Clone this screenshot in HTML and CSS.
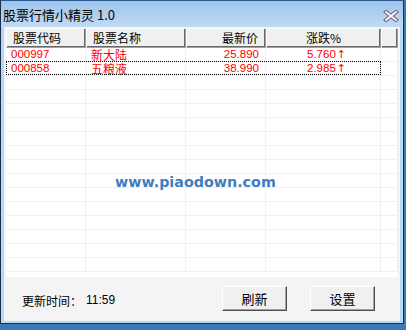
FILE: index.html
```html
<!DOCTYPE html>
<html>
<head>
<meta charset="utf-8">
<link rel="stylesheet" href="styles.css">
</head>
<body>
<div class="window">
  <div class="titlebar">
    <span class="title">股票行情小精灵 1.0</span>
    <svg class="close" width="16" height="12" viewBox="0 0 16 12">
      <path d="M3 2 L13 10 M13 2 L3 10" stroke="#6a5a70" stroke-width="4" stroke-linecap="square"/>
      <path d="M3 2 L13 10 M13 2 L3 10" stroke="#f4f4f6" stroke-width="2" stroke-linecap="square"/>
    </svg>
  </div>
  <div class="client">
    <div class="list">
      <div class="header">
        <div class="hc c1">股票代码</div>
        <div class="hc c2">股票名称</div>
        <div class="hc c3">最新价</div>
        <div class="hc c4">涨跌%</div>
        <div class="hc c5"></div>
      </div>
      <div class="rows">
        <div class="row data">
          <div class="cell c1 num">000997</div>
          <div class="cell c2">新大陆</div>
          <div class="cell c3 num">25.890</div>
          <div class="cell c4 num">5.760<span class="arrow">↑</span></div>
          <div class="cell c5"></div>
        </div>
        <div class="row data focus">
          <div class="cell c1 num">000858</div>
          <div class="cell c2">五粮液</div>
          <div class="cell c3 num">38.990</div>
          <div class="cell c4 num">2.985<span class="arrow">↑</span></div>
          <div class="cell c5"></div>
        </div>
        <div class="row"><div class="cell c1"></div><div class="cell c2"></div><div class="cell c3"></div><div class="cell c4"></div><div class="cell c5"></div></div>
        <div class="row"><div class="cell c1"></div><div class="cell c2"></div><div class="cell c3"></div><div class="cell c4"></div><div class="cell c5"></div></div>
        <div class="row"><div class="cell c1"></div><div class="cell c2"></div><div class="cell c3"></div><div class="cell c4"></div><div class="cell c5"></div></div>
        <div class="row"><div class="cell c1"></div><div class="cell c2"></div><div class="cell c3"></div><div class="cell c4"></div><div class="cell c5"></div></div>
        <div class="row"><div class="cell c1"></div><div class="cell c2"></div><div class="cell c3"></div><div class="cell c4"></div><div class="cell c5"></div></div>
        <div class="row"><div class="cell c1"></div><div class="cell c2"></div><div class="cell c3"></div><div class="cell c4"></div><div class="cell c5"></div></div>
        <div class="row"><div class="cell c1"></div><div class="cell c2"></div><div class="cell c3"></div><div class="cell c4"></div><div class="cell c5"></div></div>
        <div class="row"><div class="cell c1"></div><div class="cell c2"></div><div class="cell c3"></div><div class="cell c4"></div><div class="cell c5"></div></div>
        <div class="row"><div class="cell c1"></div><div class="cell c2"></div><div class="cell c3"></div><div class="cell c4"></div><div class="cell c5"></div></div>
        <div class="row"><div class="cell c1"></div><div class="cell c2"></div><div class="cell c3"></div><div class="cell c4"></div><div class="cell c5"></div></div>
        <div class="row"><div class="cell c1"></div><div class="cell c2"></div><div class="cell c3"></div><div class="cell c4"></div><div class="cell c5"></div></div>
        <div class="row"><div class="cell c1"></div><div class="cell c2"></div><div class="cell c3"></div><div class="cell c4"></div><div class="cell c5"></div></div>
        <div class="row"><div class="cell c1"></div><div class="cell c2"></div><div class="cell c3"></div><div class="cell c4"></div><div class="cell c5"></div></div>
        <div class="row"><div class="cell c1"></div><div class="cell c2"></div><div class="cell c3"></div><div class="cell c4"></div><div class="cell c5"></div></div>
      </div>
      <div class="watermark">www.piaodown.com</div>
    </div>
    <div class="footer">
      <span class="label">更新时间：</span><span class="time">11:59</span>
      <div class="buttons">
        <button class="btn">刷新</button>
        <button class="btn">设置</button>
      </div>
    </div>
  </div>
</div>
</body>
</html>
```
FILE: styles.css
```css
html, body {
  margin: 0;
  padding: 0;
}
body {
  width: 406px;
  height: 330px;
  background: #3c78b8;
  overflow: hidden;
  font-family: "Noto Sans CJK SC", "DejaVu Sans", sans-serif;
  font-size: 12px;
}
.window {
  width: 402px;
  height: 322px;
  border: 1px solid #16304f;
  border-top-color: #2a5a90;
  background: linear-gradient(#9dc4ec 0px, #c2dbf4 27px, #b9d6f2 27px, #b9d6f2 100%);
  display: flex;
  flex-direction: column;
}
.titlebar {
  height: 26px;
  display: flex;
  align-items: center;
  justify-content: space-between;
  padding: 0 4px 0 2px;
}
.title {
  font-size: 13px;
  color: #000;
  line-height: 26px;
  padding-top: 1px;
}
.close {
  margin-top: 4px;
}
.client {
  margin: 0 3px;
  height: 294px;
  background: #f4f4f4;
  display: flex;
  flex-direction: column;
}
.list {
  position: relative;
  margin: 1px 2px 0 2px;
  height: 249px;
  background: #fff;
  overflow: hidden;
}
.header {
  display: flex;
  height: 20px;
}
.hc {
  box-sizing: border-box;
  height: 20px;
  background: #f0f0f0;
  border-top: 1px solid #fff;
  border-left: 1px solid #fff;
  border-right: 1px solid #a0a0a0;
  border-bottom: 1px solid #a0a0a0;
  box-shadow: inset -1px -1px 0 #696969;
  line-height: 18px;
  color: #000;
  padding: 0 6px;
  white-space: nowrap;
}
.c1 { width: 80px; }
.c2 { width: 100px; }
.c3 { width: 80px; text-align: right; }
.c4 { width: 115px; text-align: center; }
.c5 { flex: 1; }
.hc.c3 { padding-right: 7px; }
.rows {
  display: flex;
  flex-direction: column;
}
.row {
  display: flex;
  height: 14px;
  box-sizing: border-box;
}
.cell {
  box-sizing: border-box;
  height: 14px;
  line-height: 14px;
  border-right: 1px solid #f0f0f0;
  border-bottom: 1px solid #f0f0f0;
  color: #ff0000;
  padding: 0 5px;
  white-space: nowrap;
  font-size: 12px;
}
.cell.num {
  font-family: "Liberation Sans", sans-serif;
  font-size: 11.5px;
  line-height: 13px;
}
.cell.c1 { padding-left: 5px; }
.cell.c3 { padding-right: 6px; }
.cell.c4 { padding-left: 12px; }
.row.focus {
  position: relative;
}
.row.focus::after {
  content: "";
  position: absolute;
  left: 0;
  top: -1px;
  width: 375px;
  height: 14px;
  box-sizing: border-box;
  border: 1px dotted #000;
}
.arrow {
  font-family: "DejaVu Sans", sans-serif;
  font-size: 11px;
  margin-left: 1px;
}
.watermark {
  position: absolute;
  left: 109px;
  top: 146px;
  font-family: "DejaVu Sans", sans-serif;
  font-weight: bold;
  font-size: 14.3px;
  color: #3f7dc0;
  letter-spacing: 0px;
}
.footer {
  flex: 1;
  display: flex;
  align-items: flex-start;
  padding: 9px 0 0 18px;
  position: relative;
}
.label {
  margin-top: 6px;
  color: #000;
}
.time {
  margin-top: 7px;
  margin-left: 4px;
  font-family: "Liberation Sans", sans-serif;
  font-size: 12px;
  color: #000;
}
.buttons {
  margin-left: auto;
  margin-right: 25px;
  display: flex;
  gap: 23px;
}
.btn {
  width: 65px;
  height: 25px;
  box-sizing: border-box;
  background: #f0f0f0;
  border-top: 1px solid #fff;
  border-left: 1px solid #fff;
  border-right: 1px solid #505050;
  border-bottom: 1px solid #505050;
  box-shadow: inset -1px -1px 0 #a0a0a0;
  font-family: "Noto Sans CJK SC", sans-serif;
  font-size: 13px;
  color: #000;
  padding: 0;
  line-height: 22px;
}
```
